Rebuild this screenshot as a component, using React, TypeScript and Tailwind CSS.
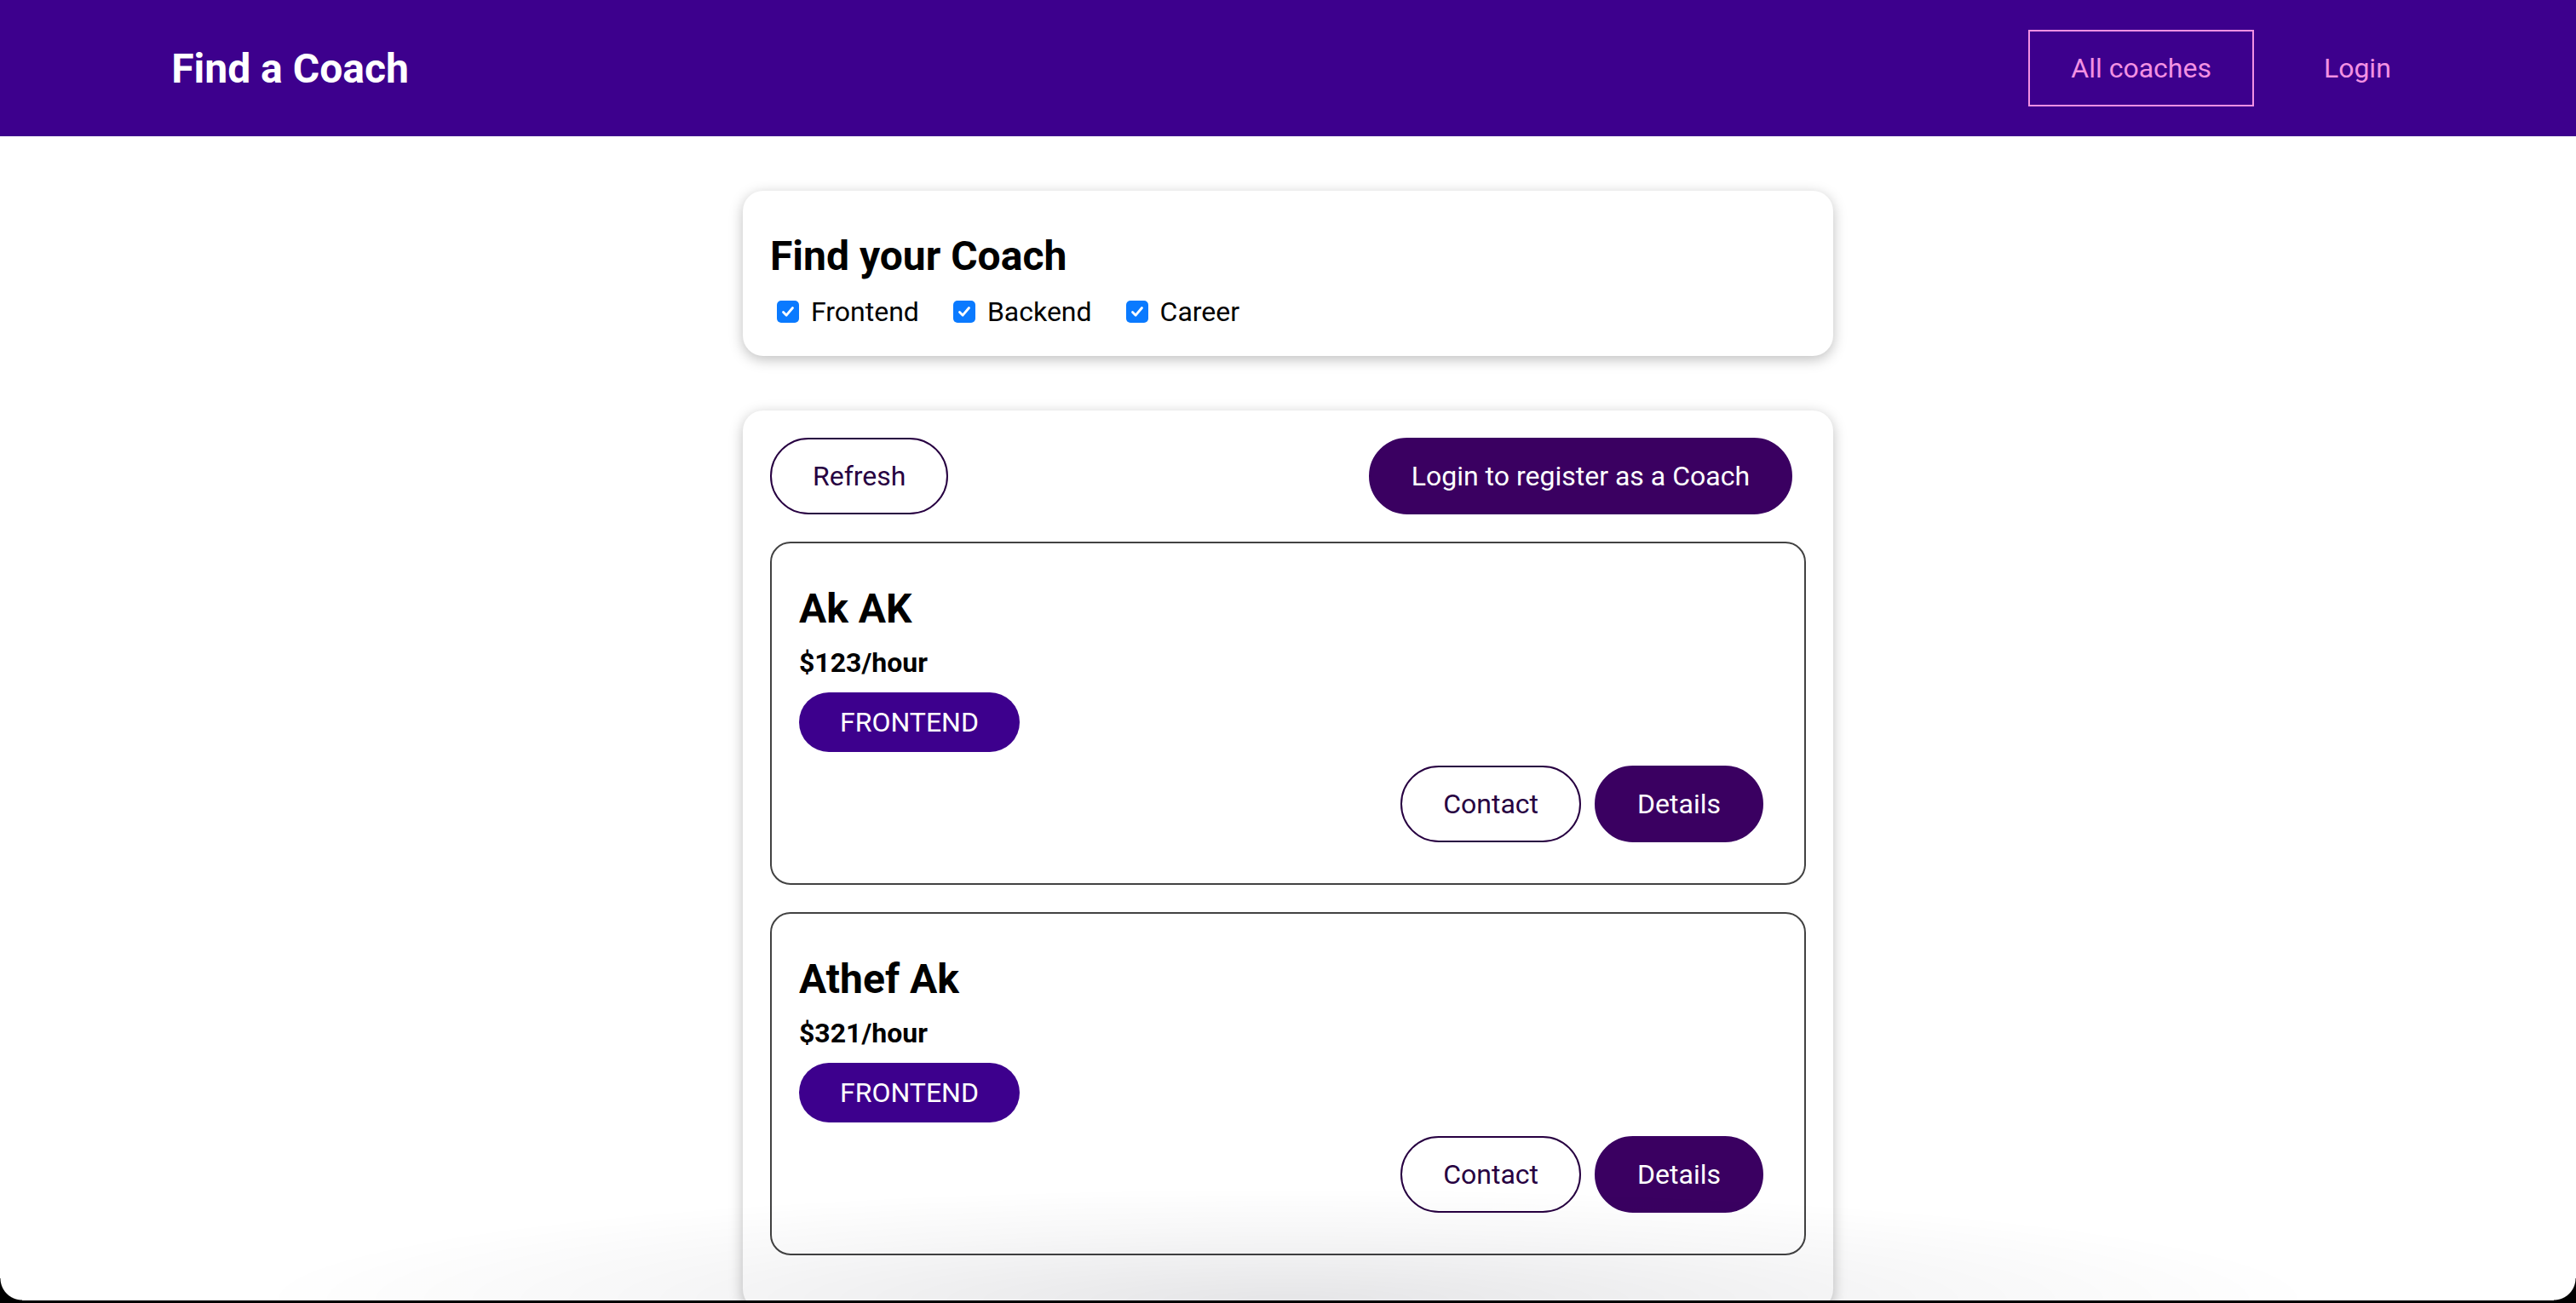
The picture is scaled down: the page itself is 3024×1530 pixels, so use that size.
import React from "react";

function Checkbox() {
  return (
    <span className="ml-[8px] mr-[6px] my-[6px] flex h-[26px] w-[26px] items-center justify-center rounded-[5px] bg-[#0a7aff]">
      <svg width="18" height="18" viewBox="0 0 18 18" fill="none">
        <path d="M3.5 9.5 L7.2 13.2 L14.5 4.5" stroke="white" strokeWidth="2.8" strokeLinecap="round" strokeLinejoin="round" />
      </svg>
    </span>
  );
}

function FilterOption({ label }: { label: string }) {
  return (
    <div className="mr-[32px] flex items-center">
      <Checkbox />
      <label className="ml-[8px] text-[32px] leading-[normal]">{label}</label>
    </div>
  );
}

function Button({ outline, children }: { outline?: boolean; children: React.ReactNode }) {
  return (
    <button
      className={
        outline
          ? "mr-[16px] inline-block rounded-[60px] border-2 border-[#270041] bg-transparent px-[48px] py-[24px] text-[32px] leading-[normal] text-[#270041]"
          : "mr-[16px] inline-block rounded-[60px] border-2 border-[#3a0061] bg-[#3a0061] px-[48px] py-[24px] text-[32px] leading-[normal] text-white"
      }
    >
      {children}
    </button>
  );
}

function CoachItem({ name, rate }: { name: string; rate: number }) {
  return (
    <li className="my-[32px] rounded-[24px] border-2 border-[#424242] p-[32px]">
      <h3 className="my-[16px] text-[48px] font-bold leading-[normal]">{name}</h3>
      <h4 className="my-[16px] text-[32px] font-bold leading-[normal]">${rate}/hour</h4>
      <div className="my-[16px] flex">
        <span className="mr-[16px] inline-block rounded-[60px] bg-[#3d008d] px-[48px] py-[16px] text-[32px] leading-[normal] text-white">
          FRONTEND
        </span>
      </div>
      <div className="my-[16px] flex justify-end">
        <Button outline>Contact</Button>
        <Button>Details</Button>
      </div>
    </li>
  );
}

export default function App() {
  return (
    <div className="relative min-h-screen bg-white font-[Roboto,sans-serif] text-black">
      <header className="flex h-[160px] w-full items-center justify-center bg-[#3d008d]">
        <nav className="mx-auto flex w-[90%] items-center justify-between">
          <h1 className="m-0 text-[48px] font-bold leading-[normal]">
            <a className="inline-block border-2 border-transparent px-[48px] py-[24px] text-white">Find a Coach</a>
          </h1>
          <ul className="m-0 flex list-none items-center justify-center p-0">
            <li className="mx-[16px]">
              <a className="inline-block border-2 border-[#f391e3] px-[48px] py-[24px] text-[32px] leading-[normal] text-[#f391e3]">
                All coaches
              </a>
            </li>
            <li className="mx-[16px]">
              <a className="inline-block border-2 border-transparent px-[48px] py-[24px] text-[32px] leading-[normal] text-[#f391e3]">
                Login
              </a>
            </li>
          </ul>
        </nav>
      </header>
      <main className="pt-[64px]">
        <section>
          <div className="mx-auto mb-[64px] max-w-[1280px] rounded-[24px] p-[32px] shadow-[0_4px_16px_rgba(0,0,0,0.26)]">
            <h2 className="my-[16px] text-[48px] font-bold leading-[normal]">Find your Coach</h2>
            <div className="flex h-[41px] items-center">
              <FilterOption label="Frontend" />
              <FilterOption label="Backend" />
              <FilterOption label="Career" />
            </div>
          </div>
        </section>
        <section>
          <div className="mx-auto mb-[64px] max-w-[1280px] rounded-[24px] p-[32px] shadow-[0_4px_16px_rgba(0,0,0,0.26)]">
            <div className="flex justify-between">
              <Button outline>Refresh</Button>
              <Button>Login to register as a Coach</Button>
            </div>
            <ul className="m-0 list-none p-0">
              <CoachItem name="Ak AK" rate={123} />
              <CoachItem name="Athef Ak" rate={321} />
            </ul>
          </div>
        </section>
      </main>
      <div className="pointer-events-none fixed bottom-[3px] left-[320px] right-[320px] h-[130px] bg-[radial-gradient(ellipse_at_bottom,rgba(0,0,20,0.1),rgba(0,0,20,0.03)_45%,transparent_72%)]" />
      <div className="pointer-events-none fixed bottom-[3px] left-0 h-[26px] w-[26px] bg-[radial-gradient(circle_at_top_right,transparent_25px,black_26px)]" />
      <div className="pointer-events-none fixed bottom-[3px] right-0 h-[26px] w-[26px] bg-[radial-gradient(circle_at_top_left,transparent_25px,black_26px)]" />
      <div className="pointer-events-none fixed bottom-0 left-0 right-0 h-[3px] bg-black" />
    </div>
  );
}
